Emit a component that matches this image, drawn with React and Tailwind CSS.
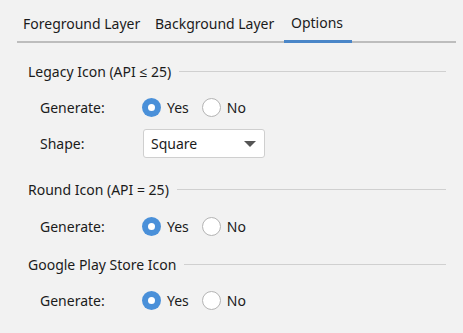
import { useState } from 'react'

function Radio({ checked, label, onClick }) {
  return (
    <button type="button" onClick={onClick} className="flex items-center">
      {checked ? (
        <span className="flex h-[19px] w-[19px] items-center justify-center rounded-full bg-[#4a90d9]">
          <span className="h-[7px] w-[7px] rounded-full bg-white" />
        </span>
      ) : (
        <span className="h-[19px] w-[19px] rounded-full border border-[#b4b4b4] bg-white" />
      )}
      <span className="ml-[6px]">{label}</span>
    </button>
  )
}

function Header({ title, className }) {
  return (
    <div className={'flex h-[28px] items-center pl-[28px] pr-[17px] ' + className}>
      <span className="whitespace-nowrap">{title}</span>
      <div className="ml-[8px] h-px flex-1 bg-[#d0d0d0]" />
    </div>
  )
}

function GenerateRow({ className }) {
  const [yes, setYes] = useState(true)
  return (
    <div className={'flex h-[28px] items-center pl-[40px] ' + className}>
      <span className="w-[102px]">Generate:</span>
      <Radio checked={yes} label="Yes" onClick={() => setYes(true)} />
      <div className="ml-[13px]">
        <Radio checked={!yes} label="No" onClick={() => setYes(false)} />
      </div>
    </div>
  )
}

export default function App() {
  const tabs = [
    { name: 'Foreground Layer', w: 'w-[132px]' },
    { name: 'Background Layer', w: 'w-[135px]' },
    { name: 'Options', w: 'w-[68px]' },
  ]
  const [active, setActive] = useState(2)

  return (
    <div
      className="h-[333px] w-[463px] bg-[#f2f2f2] text-[14px] text-[#1b1b1b]"
      style={{ fontFamily: '"Noto Sans", "Open Sans", sans-serif' }}
    >
      {/* Tabs */}
      <div className="pt-[7px] pl-[17px] pr-[7px]">
        <div className="flex border-b-2 border-[#bdbdbd]">
          {tabs.map((t, i) => (
            <button
              key={t.name}
              type="button"
              onClick={() => setActive(i)}
              className={
                'h-[34px] whitespace-nowrap pl-[6px] text-left leading-none ' +
                t.w +
                (i === active ? ' -mb-[2px] h-[36px] border-b-[3px] border-[#4a86c8] pb-[1px] pl-[7px]' : '')
              }
            >
              {t.name}
            </button>
          ))}
        </div>
      </div>

      <Header title="Legacy Icon (API ≤ 25)" className="mt-[14px]" />
      <GenerateRow className="mt-[8px]" />

      <div className="mt-[8px] flex h-[29px] items-center pl-[40px]">
        <span className="w-[103px]">Shape:</span>
        <div className="flex h-[29px] w-[122px] items-center justify-between rounded-[3px] border border-[#cfcfcf] bg-white pl-[7px] pr-[8px]">
          <span>Square</span>
          <svg width="12" height="6" viewBox="0 0 12 6">
            <path d="M0 0h12L6 6z" fill="#555" />
          </svg>
        </div>
      </div>

      <Header title="Round Icon (API = 25)" className="mt-[17px]" />
      <GenerateRow className="mt-[9px]" />

      <Header title="Google Play Store Icon" className="mt-[10px]" />
      <GenerateRow className="mt-[8px]" />
    </div>
  )
}
